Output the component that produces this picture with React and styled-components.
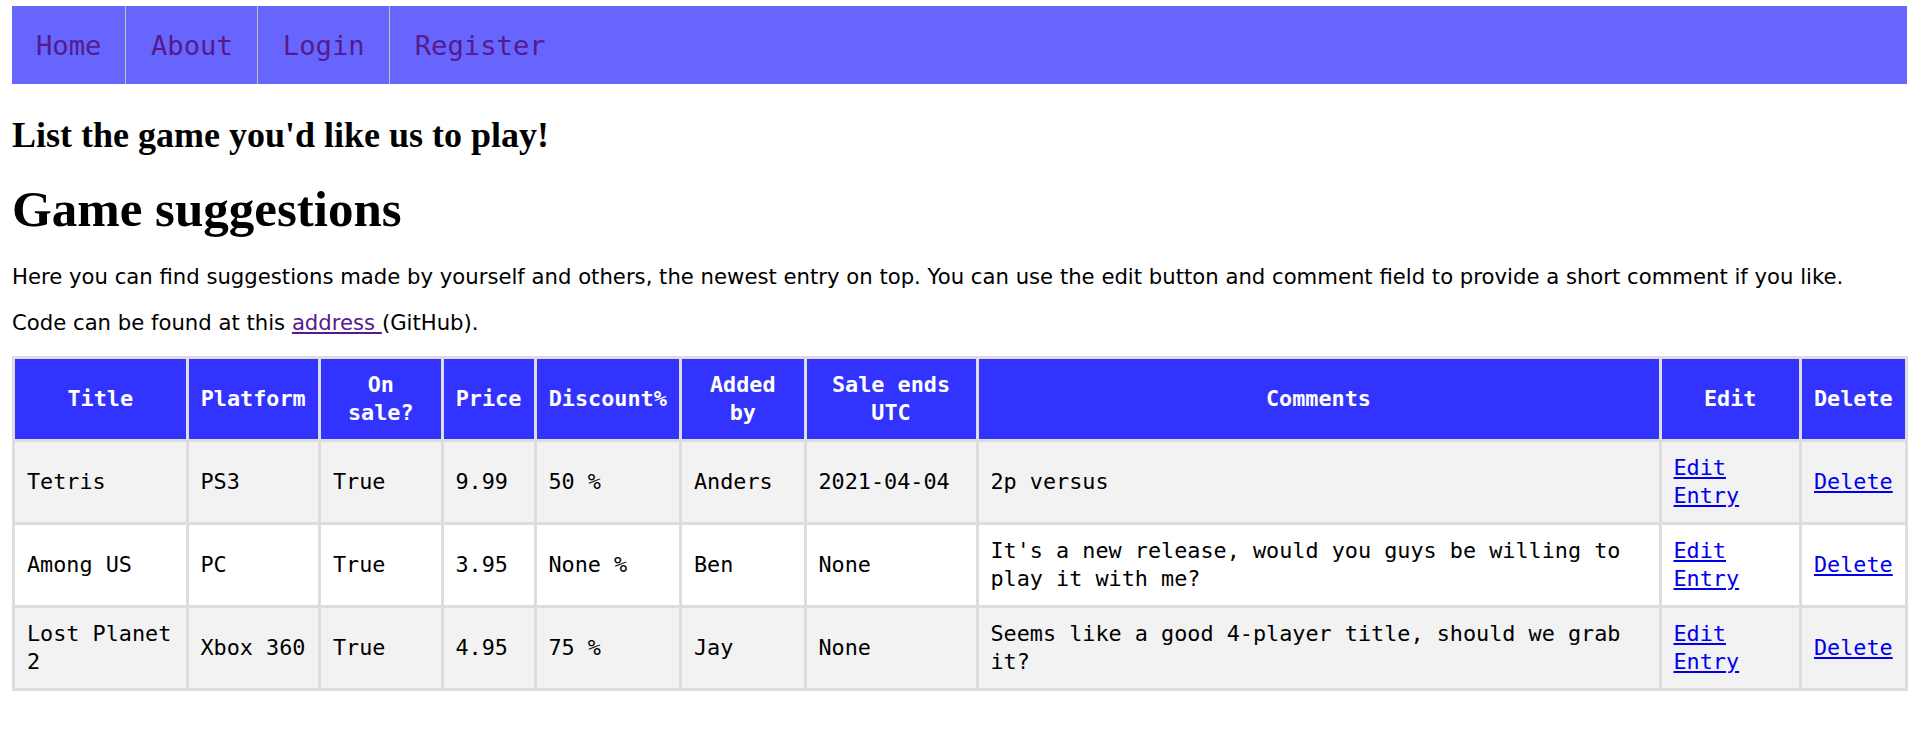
import React from "react";
import styled, { createGlobalStyle } from "styled-components";

const Global = createGlobalStyle`
  html, body { margin: 0; padding: 0; background: #ffffff; }
  body { font-family: "DejaVu Sans", Verdana, sans-serif; color: #000; }
`;

const Page = styled.div`
  padding: 6px 12px 0 12px;
`;

const Nav = styled.nav`
  display: flex;
  align-items: stretch;
  height: 78px;
  background: #6666ff;
`;

const NavLink = styled.a`
  display: flex;
  align-items: center;
  padding: 0 24px;
  font-family: "DejaVu Sans Mono", "Liberation Mono", monospace;
  font-size: 27.2px;
  color: #551a8b;
  text-decoration: none;
  & + & {
    border-left: 1px solid #c4c0b0;
    padding-left: 24.5px;
    padding-right: 24.5px;
  }
`;

const SubTitle = styled.h2`
  margin: 31px 0 0;
  font-family: "Liberation Serif", "Times New Roman", serif;
  font-weight: bold;
  font-size: 36px;
  line-height: 40px;
`;

const Title = styled.h1`
  margin: 27px 0 0;
  font-family: "Liberation Serif", "Times New Roman", serif;
  font-weight: bold;
  font-size: 51px;
  line-height: 54px;
`;

const Para = styled.p`
  margin: ${(p) => p.$top}px 0 0;
  font-family: "DejaVu Sans", Verdana, sans-serif;
  font-size: 21.2px;
  line-height: 24px;
`;

const TextLink = styled.a`
  color: #551a8b;
  text-decoration: underline;
`;

const Table = styled.table`
  margin-top: 21px;
  width: 100%;
  border-collapse: collapse;
  table-layout: fixed;
  border: 3px solid #dddddd;
  font-family: "DejaVu Sans Mono", "Liberation Mono", monospace;
  font-size: 21.8px;
  line-height: 28px;
`;

const Col = styled.col`
  width: ${(p) => p.$w}px;
`;

const Th = styled.th`
  background: #3333ff;
  color: #ffffff;
  font-weight: bold;
  text-align: center;
  vertical-align: middle;
  padding: 12px;
  border: 3px solid #dddddd;
`;

const Row = styled.tr`
  background: ${(p) => (p.$alt ? "#f2f2f2" : "#ffffff")};
`;

const Td = styled.td`
  padding: 12px;
  text-align: left;
  vertical-align: middle;
  border: 3px solid #dddddd;
  color: #000;
`;

const CellLink = styled.a`
  color: #0000ee;
  text-decoration: underline;
`;

const widths = [173.5, 132.5, 122.5, 93, 145.5, 124.5, 172, 683, 140.5, 105.5];

const headers = [
  "Title",
  "Platform",
  "On sale?",
  "Price",
  "Discount%",
  "Added by",
  "Sale ends UTC",
  "Comments",
  "Edit",
  "Delete",
];

const rows = [
  ["Tetris", "PS3", "True", "9.99", "50 %", "Anders", "2021-04-04", "2p versus"],
  [
    "Among US",
    "PC",
    "True",
    "3.95",
    "None %",
    "Ben",
    "None",
    "It's a new release, would you guys be willing to play it with me?",
  ],
  [
    "Lost Planet 2",
    "Xbox 360",
    "True",
    "4.95",
    "75 %",
    "Jay",
    "None",
    "Seems like a good 4-player title, should we grab it?",
  ],
];

export default function App() {
  return (
    <>
      <Global />
      <Page>
        <Nav>
          <NavLink href="#">Home</NavLink>
          <NavLink href="#">About</NavLink>
          <NavLink href="#">Login</NavLink>
          <NavLink href="#">Register</NavLink>
        </Nav>
        <SubTitle>List the game you'd like us to play!</SubTitle>
        <Title>Game suggestions</Title>
        <Para $top={29}>
          Here you can find suggestions made by yourself and others, the newest entry on top. You
          can use the edit button and comment field to provide a short comment if you like.
        </Para>
        <Para $top={22}>
          Code can be found at this <TextLink href="#">address </TextLink>(GitHub).
        </Para>
        <Table>
          <colgroup>
            {widths.map((w, i) => (
              <Col key={i} $w={w} />
            ))}
          </colgroup>
          <thead>
            <tr>
              {headers.map((h) => (
                <Th key={h}>{h}</Th>
              ))}
            </tr>
          </thead>
          <tbody>
            {rows.map((r, i) => (
              <Row key={i} $alt={i % 2 === 0}>
                {r.map((c, j) => (
                  <Td key={j}>{c}</Td>
                ))}
                <Td>
                  <CellLink href="#">Edit Entry</CellLink>
                </Td>
                <Td>
                  <CellLink href="#">Delete</CellLink>
                </Td>
              </Row>
            ))}
          </tbody>
        </Table>
      </Page>
    </>
  );
}
